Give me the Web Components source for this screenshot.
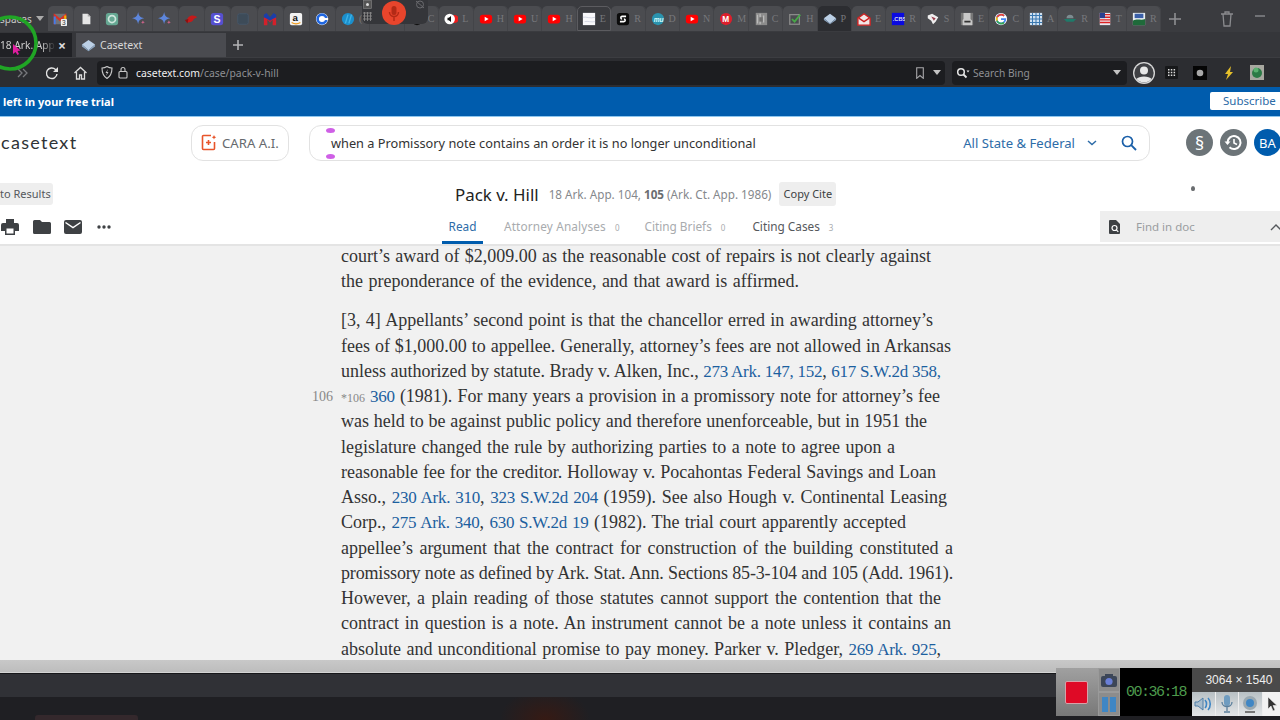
<!DOCTYPE html>
<html>
<head>
<meta charset="utf-8">
<title>Pack v. Hill - Casetext</title>
<style>
  html, body { margin: 0; padding: 0; }
  body { width: 1280px; height: 720px; overflow: hidden; background: #f1f1f1; font-family: "Noto Sans", sans-serif; position: relative; }
</style>
</head>
<body>
<browser-chrome></browser-chrome>
<trial-banner></trial-banner>
<site-header></site-header>
<case-subheader></case-subheader>
<doc-view>
  <doc-para>
    <doc-line w="590">court’s award of $2,009.00 as the reasonable cost of repairs is not clearly against</doc-line>
    <doc-line w="458">the preponderance of the evidence, and that award is affirmed.</doc-line>
  </doc-para>
  <doc-para>
    <doc-line w="592">[3, 4] Appellants’ second point is that the chancellor erred in awarding attorney’s</doc-line>
    <doc-line w="610">fees of $1,000.00 to appellee. Generally, attorney’s fees are not allowed in Arkansas</doc-line>
    <doc-line w="599">unless authorized by statute. Brady v. Alken, Inc., <a>273 Ark. 147, 152</a>, <a>617 S.W.2d 358,</a></doc-line>
    <doc-line w="599" page="106"><small>*106</small> <a>360</a> (1981). For many years a provision in a promissory note for attorney’s fee</doc-line>
    <doc-line w="586">was held to be against public policy and therefore unenforceable, but in 1951 the</doc-line>
    <doc-line w="554">legislature changed the rule by authorizing parties to a note to agree upon a</doc-line>
    <doc-line w="595">reasonable fee for the creditor. Holloway v. Pocahontas Federal Savings and Loan</doc-line>
    <doc-line w="606">Asso., <a>230 Ark. 310</a>, <a>323 S.W.2d 204</a> (1959). See also Hough v. Continental Leasing</doc-line>
    <doc-line w="565">Corp., <a>275 Ark. 340</a>, <a>630 S.W.2d 19</a> (1982). The trial court apparently accepted</doc-line>
    <doc-line w="612">appellee’s argument that the contract for construction of the building constituted a</doc-line>
    <doc-line w="612" tight>promissory note as defined by Ark. Stat. Ann. Sections 85-3-104 and 105 (Add. 1961).</doc-line>
    <doc-line w="600">However, a plain reading of those statutes cannot support the contention that the</doc-line>
    <doc-line w="610">contract in question is a note. An instrument cannot be a note unless it contains an</doc-line>
    <doc-line w="600">absolute and unconditional promise to pay money. Parker v. Pledger, <a>269 Ark. 925</a>,</doc-line>
  </doc-para>
</doc-view>
<task-strip></task-strip>
<mic-overlay></mic-overlay>
<click-marker></click-marker>
<recorder-widget></recorder-widget>

<script>
const FAV = {
  gmail: '<rect x="1" y="2" width="14" height="12" rx="1" fill="#e8e8e8" opacity=".25"/><path d="M2 14V4l6 5 6-5v10" fill="none" stroke="#d93025" stroke-width="2.4"/><path d="M14 14V4" stroke="#f4b400" stroke-width="2.4"/><path d="M2 14V5" stroke="#3f7fe8" stroke-width="2.4"/><rect x="9" y="8" width="7" height="8" rx="1" fill="#eee"/><text x="10.4" y="15" font-size="7.5" font-family="Liberation Sans" fill="#333">3</text>',
  doc: '<path d="M4 2h6l3 3v9H4z" fill="#e6e6e6"/><path d="M10 2v3h3" fill="#aaa"/>',
  gpt: '<rect x="1" y="1" width="14" height="14" rx="3" fill="#66a893"/><circle cx="8" cy="8" r="4" fill="none" stroke="#cfe6dd" stroke-width="2"/>',
  gem: '<path d="M7 0c.7 4.500 2.400 6.300 7 7-4.600.7-6.300 2.500-7 7-.7-4.500-2.400-6.300-7-7 4.600-.7 6.300-2.500 7-7z" fill="#5d86dc"/><path d="M12.500 9.500c.2 1.500.8 2.100 2.300 2.300-1.500.2-2.100.8-2.300 2.300-.2-1.500-.8-2.100-2.300-2.300 1.500-.2 2.100-.8 2.300-2.300z" fill="#d9668f"/>',
  cap: '<path d="M3 12c0-5 3-8 7-8 2 0 4 1 5 2l-4 2c-1 3-3 4-8 4z" fill="#c41a1a"/><path d="M1 9l4-1-1 5z" fill="#8d1010"/>',
  s: '<rect x="1" y="1" width="14" height="14" rx="3" fill="#5650d0"/><text x="4" y="12.500" font-size="12" font-weight="700" font-family="Liberation Sans" fill="#fff">S</text>',
  box: '<rect x="2" y="2" width="12" height="12" rx="2" fill="#3d4b58" stroke="#46576a"/>',
  m: '<path d="M1 15V6h14v9h-4V8.500l-3 3.500-3-3.500V15z" fill="#d4202a"/><path d="M1 6V3l3-2 4 5 4-5 3 2v3l-4 2-3 2-3-2z" fill="#1b3fa8"/>',
  a: '<rect x="1" y="1" width="14" height="14" rx="2" fill="#f2f2f2"/><text x="4" y="10.500" font-size="11" font-weight="700" font-family="Liberation Sans" fill="#111">a</text><path d="M3 12c3 1.800 7 1.800 10 0" fill="none" stroke="#f09a1a" stroke-width="1.400"/>',
  c: '<circle cx="8" cy="8" r="7" fill="#fff"/><circle cx="8" cy="8" r="5" fill="none" stroke="#1f66e0" stroke-width="3"/><rect x="11" y="6.800" width="4" height="2.400" fill="#fff"/>',
  hp: '<circle cx="8" cy="8" r="7" fill="#1b8fcc"/><path d="M5 13l3-10M9 13l3-10" stroke="#3fb2e6" stroke-width="1.600"/>',
  spk: '<circle cx="12" cy="8" r="4.500" fill="#ee1c1c"/><circle cx="6.500" cy="8" r="6" fill="#fff"/><path d="M4 6.500h1.500L8 4.500v7l-2.500-2H4z" fill="#111"/>',
  yt: '<rect x="1" y="3" width="14" height="10" rx="3" fill="#f00"/><path d="M6.500 5.500v5L11 8z" fill="#fff"/>',
  page: '<rect x="1" y="1" width="14" height="14" fill="#f8f8fa"/><path d="M1 6c4-1 8 2 14 0M3 11c4-1 7 1 12 0" fill="none" stroke="#c4c8d8" stroke-width=".8"/>',
  sblack: '<rect x="1" y="1" width="14" height="14" rx="3" fill="#0c0c0c"/><path d="M11.500 5H7a1.500 1.500 0 0 0 0 3M4.500 11H9a1.500 1.500 0 0 0 0-3" fill="none" stroke="#fff" stroke-width="1.800"/>',
  mu: '<circle cx="8" cy="8" r="7" fill="#2a93ae"/><text x="3" y="11" font-size="7.500" font-style="italic" font-weight="700" font-family="Liberation Sans" fill="#dff">mu</text>',
  mred: '<circle cx="8" cy="8" r="7" fill="#dc1f2c"/><text x="3.600" y="11.500" font-size="9.500" font-weight="700" font-family="Liberation Sans" fill="#fff">M</text>',
  gray: '<rect x="2" y="1" width="13" height="14" fill="#8c8c8c"/><path d="M4 3v10M7 2v12M11 4v8" stroke="#bbb" stroke-width="1.500"/><rect x="6" y="6" width="4" height="5" fill="#6f6f6f"/>',
  check: '<rect x="2" y="3" width="11" height="11" fill="none" stroke="#8a8a8a" stroke-width="1.500"/><path d="M4.500 8l3 3L14 3" fill="none" stroke="#48a848" stroke-width="2"/>',
  cube: '<path d="M8 2l7 5-7 6-7-6z" fill="#bcd0e6"/><path d="M1 7l7 6 7-6v2l-7 5-7-5z" fill="#8ea8c4"/>',
  env: '<path d="M1 7l7-5 7 5v8H1z" fill="#f2e6e6" stroke="#c22" stroke-width="1.600"/><path d="M2 7l6 4 6-4" fill="none" stroke="#c22" stroke-width="1.600"/>',
  cbs: '<rect x="1" y="1" width="14" height="14" fill="#0a0ae0"/><text x="2" y="10.500" font-size="6.500" font-weight="700" font-family="Liberation Sans" fill="#dde">.CBS</text>',
  sc: '<path d="M2 4l5-2 7 4-3 5-3 3-2-4-4-3z" fill="#eee"/><path d="M6 5l5 2-2 3z" fill="#9a3a4a"/>',
  face: '<rect x="1" y="1" width="14" height="14" fill="#777"/><path d="M4 1h8v7l2 2v5H3V9l1-1z" fill="#c8c8c8"/><path d="M5 10h7v2H5z" fill="#333"/>',
  g: '<circle cx="8" cy="8" r="7" fill="#fff"/><path d="M8 8h5a5 5 0 1 1-1.500-3.500" fill="none" stroke="#4285f4" stroke-width="2"/><path d="M11.500 4.500A5 5 0 0 0 3.500 6" fill="none" stroke="#ea4335" stroke-width="2"/><path d="M3.500 6a5 5 0 0 0 0 4" fill="none" stroke="#fbbc05" stroke-width="2"/><path d="M3.500 10a5 5 0 0 0 8 2" fill="none" stroke="#34a853" stroke-width="2"/>',
  pat: '<rect x="1" y="1" width="14" height="14" fill="#cfe0f0"/><path d="M1 4h14M1 8h14M1 12h14M4 1v14M8 1v14M12 1v14" stroke="#3a78b0" stroke-width="1.200"/>',
  hat: '<path d="M4 7a4 4 0 0 1 8 0z" fill="#7c8c90"/><path d="M1 8h14l-3 3H4z" fill="#1f7a6a"/>',
  flag: '<rect x="2" y="1" width="12" height="14" fill="#e8e8f0"/><path d="M2 3h12M2 6h12M2 9h12M2 12h12" stroke="#d22" stroke-width="1.500"/><rect x="2" y="1" width="6" height="6" fill="#2a3f90"/>',
  usda: '<rect x="1" y="1" width="14" height="14" fill="#e8eef0"/><path d="M1 10c5-3 9 0 14-2v7H1z" fill="#1f6a3a"/><rect x="3" y="2" width="10" height="5" fill="#3a5fa8"/>',
  black: '<circle cx="8" cy="8" r="7" fill="#111"/>'
};

function shadow(el, html) {
  el.attachShadow({ mode: 'open' }).innerHTML = html;
}

class PinTab extends HTMLElement {
  connectedCallback() {
    const w = this.getAttribute('w') || 34.4;
    shadow(this, `
      <style>
        :host { display: block; box-sizing: border-box; flex: none; height: 25px; background: #4b4c50; border-radius: 5px 5px 0 0; overflow: hidden; box-shadow: inset -1px 0 0 #434448; }
        :host([active]) { background: #2c2d31; }
        :host([framed]) { background: #3a3b3f; outline: 1px solid #5c5c60; outline-offset: -1px; }
        .in { display: flex; align-items: center; height: 100%; padding-left: 5px; }
        svg { width: 14px; height: 14px; flex: none; }
        span { margin-left: 4px; font: 10px "Liberation Serif", serif; color: #77787c; }
      </style>
      <div class="in"><svg viewBox="0 0 16 16">${FAV[this.getAttribute('icon')] || ''}</svg><span>${this.getAttribute('letter') || ''}</span></div>`);
    this.style.width = w + 'px';
  }
}
customElements.define('pin-tab', PinTab);

class BrowserChrome extends HTMLElement {
  connectedCallback() {
    const first = ['gmail','doc','gpt','gem','gem','cap','s','box','m','a','c'];
    const rest = [['hp','('],['',''],['black','C'],['spk','L'],['yt','H'],['yt','U'],['yt','H'],['page','E'],['sblack','R'],['mu','D'],['yt','N'],['mred','M'],['gray','C'],['check','H'],['cube','P'],['env','E'],['cbs','R'],['sc','S'],['face','E'],['g','C'],['pat','A'],['hat','R'],['flag','T'],['usda','R']];
    const tabs = first.map(i => `<pin-tab icon="${i}" w="26.2"></pin-tab>`).join('') +
      rest.map(([i, l]) => `<pin-tab icon="${i}" letter="${l}" ${i === 'page' ? 'framed' : ''} ${i === 'cube' ? 'active' : ''}></pin-tab>`).join('');
    shadow(this, `
      <style>
        :host { display: block; height: 87px; background: #3a3b3f; font-family: "Noto Sans", sans-serif; color: #ddd; overflow: hidden; }
        .strip { display: flex; height: 32px; align-items: flex-end; box-sizing: border-box; padding-bottom: 1px; }
        .spaces { width: 48px; flex: none; height: 25px; display: flex; align-items: center; font-size: 10px; color: #c8c8c8; padding-bottom: 6px; box-sizing: content-box; margin-bottom: -6px; }
        .spaces i { margin-left: 4px; border: 4px solid transparent; border-top: 5px solid #aaa; border-bottom: 0; }
        .end { display: flex; align-items: center; height: 25px; color: #a4a4a6; }
        .end svg { display: block; }
        .tabs { display: flex; height: 25px; background: #35363a; align-items: flex-end; }
        .cur, .other { display: flex; align-items: center; height: 24px; box-sizing: border-box; font-size: 10.5px; white-space: nowrap; }
        .cur { width: 72px; background: #202125; color: #cfcfcf; }
        .cur b { font-weight: 400; font-size: 10.2px; width: 58px; flex: none; -webkit-mask-image: linear-gradient(90deg, #000 72%, transparent 96%); }
        .cur i { font-style: normal; font-size: 14px; font-weight: 700; color: #ddd; }
        .other { width: 150px; margin-left: 4px; background: #4a4b50; padding-left: 5px; color: #d8d8d8; }
        .other svg { width: 15px; height: 15px; margin-right: 4px; }
        .plus { margin-left: 6px; width: 12px; height: 12px; align-self: center; }
        .nav { display: flex; align-items: center; height: 30px; background: #2c2d31; border-top: 1px solid #3c3d41; box-sizing: border-box; }
        .nav > svg { flex: none; }
        .url { margin-left: 9px; width: 848px; height: 24px; background: #1c1d20; border-radius: 4px; display: flex; align-items: center; padding-left: 4px; box-sizing: border-box; font-size: 10.4px; }
        .url b { font-weight: 400; color: #f0f0f0; }
        .url span { color: #8f9094; }
        .url .mark { margin-left: auto; margin-right: 9px; display: block; flex: none; }
        .url em { margin-right: 4px; border: 4px solid transparent; border-top: 5px solid #c4c4c4; border-bottom: 0; }
        .find { margin-left: 7px; width: 175px; height: 24px; background: #1c1d20; border-radius: 4px; display: flex; align-items: center; padding-left: 4px; box-sizing: border-box; font-size: 10.2px; color: #8f9094; }
        .find em { margin-left: auto; margin-right: 6px; border: 4px solid transparent; border-top: 5px solid #c4c4c4; border-bottom: 0; }
        .ext { display: flex; align-items: center; margin-left: 5px; }
        .ext svg { display: block; }
      </style>
      <div class="strip">
        <div class="spaces">spaces<i></i></div>
        ${tabs}
        <div class="end">
          <svg width="14" height="14" viewBox="0 0 14 14" style="margin-left:7px"><path d="M7 1v12M1 7h12" stroke="#8e8f92" stroke-width="1.600"/></svg>
          <svg width="14" height="16" viewBox="0 0 14 16" style="margin-left:38px"><path d="M1 3h12M5 3V1h4v2M3 3l1 12h6l1-12" fill="none" stroke="#8a8b8e" stroke-width="1.300"/></svg>
          <svg width="12" height="2" viewBox="0 0 12 2" style="margin-left:21px;margin-top:-6px"><path d="M0 1h10" stroke="#8a8b8e" stroke-width="1.400"/></svg>
        </div>
      </div>
      <div class="tabs">
        <div class="cur"><b>18 Ark. App</b><i>×</i></div>
        <div class="other"><svg viewBox="0 0 16 16">${FAV.cube}</svg>Casetext</div>
        <svg class="plus" viewBox="0 0 12 12"><path d="M6 1v10M1 6h10" stroke="#b4b4b6" stroke-width="1.600"/></svg>
      </div>
      <div class="nav">
        <svg width="12" height="10" viewBox="0 0 12 10" style="margin-left:17px"><path d="M1 1l4 4-4 4M6 1l4 4-4 4" fill="none" stroke="#77787c" stroke-width="1.300"/></svg>
        <svg width="14" height="14" viewBox="0 0 14 14" style="margin-left:16px"><path d="M12 8a5.300 5.300 0 1 1-1.500-4.500L12 5" fill="none" stroke="#e4e4e4" stroke-width="1.400"/><path d="M13 1v5H8z" fill="#e4e4e4"/></svg>
        <svg width="15" height="14" viewBox="0 0 15 14" style="margin-left:14px"><path d="M1.500 7L7.500 1.500 13.500 7M3.500 6v7h3V9h2v4h3V6" fill="none" stroke="#dcdcdc" stroke-width="1.300"/></svg>
        <div class="url">
          <svg width="12" height="13" viewBox="0 0 12 13"><path d="M1 2c2 0 3.500-.5 5-1.500C7.500 1.500 9 2 11 2c0 5-1 8-5 10.500C2 10 1 7 1 2z" fill="none" stroke="#c8c8c8" stroke-width="1.100"/><path d="M7 3L4.500 7H6l-1 3 2.500-4H6z" fill="#c8c8c8"/></svg>
          <svg width="10" height="13" viewBox="0 0 10 13" style="margin:0 8px 0 5px"><rect x="1" y="5.500" width="8" height="6.500" rx="1" fill="none" stroke="#c8c8c8" stroke-width="1.100"/><path d="M3 5.500V3.500a2 2 0 0 1 4 0v2" fill="none" stroke="#c8c8c8" stroke-width="1.100"/></svg>
          <b>casetext.com</b><span>/case/pack-v-hill</span>
          <svg class="mark" width="8" height="12" viewBox="0 0 8 12"><path d="M.7.7h6.600v10.600L4 8.500.7 11.300z" fill="none" stroke="#a8a8aa" stroke-width="1.100"/></svg>
          <em></em>
        </div>
        <div class="find">
          <svg width="14" height="12" viewBox="0 0 14 12" style="margin-right:3px"><circle cx="5" cy="5" r="3.300" fill="none" stroke="#e6e6e6" stroke-width="1.500"/><path d="M7.500 7.500l3 3" stroke="#e6e6e6" stroke-width="1.800"/><path d="M10.500 3.500h3L12 5.500z" fill="#e6e6e6"/></svg>
          Search Bing<em></em>
        </div>
        <div class="ext">
          <svg width="24" height="24" viewBox="0 0 24 24"><circle cx="12" cy="12" r="11" fill="#d8d8d8"/><circle cx="12" cy="12" r="9.700" fill="#3f4044"/><circle cx="12" cy="9.500" r="4" fill="#e8e8e8"/><path d="M4.500 18c2-3.500 13-3.500 15 0a10 10 0 0 1-15 0z" fill="#e8e8e8"/></svg>
          <svg width="13" height="13" viewBox="0 0 13 13" style="margin-left:9px"><rect width="13" height="13" rx="1" fill="#17181a"/><path d="M3 3h1.500v1.500H3zM5.800 3h1.500v1.500H5.800zM8.600 3h1.500v1.500H8.600zM3 5.800h1.500v1.500H3zM5.800 5.800h1.500v1.500H5.800zM8.600 5.800h1.500v1.500H8.600zM3 8.600h1.500v1.500H3zM5.800 8.600h1.500v1.500H5.800zM8.600 8.600h1.500v1.500H8.600z" fill="#dcdcdc"/></svg>
          <svg width="14" height="14" viewBox="0 0 14 14" style="margin-left:15px"><rect width="14" height="14" fill="#050505"/><circle cx="7" cy="7" r="3.300" fill="#a8a8a8"/></svg>
          <svg width="12" height="14" viewBox="0 0 12 14" style="margin-left:16px"><path d="M8 0L2 8h3l-2 6 7-8H7z" fill="#e6c02a"/></svg>
          <svg width="14" height="15" viewBox="0 0 14 15" style="margin-left:15px"><rect width="14" height="15" fill="#a8a8a0"/><circle cx="7" cy="8" r="5" fill="#2c7a46"/><circle cx="6" cy="5" r="2.500" fill="#5ab070"/></svg>
        </div>
      </div>`);
  }
}
customElements.define('browser-chrome', BrowserChrome);

class TrialBanner extends HTMLElement {
  connectedCallback() {
    shadow(this, `
      <style>
        :host { display: flex; align-items: center; justify-content: space-between; box-sizing: border-box; height: 30px; background: #005cad; border-bottom: 1px solid #8ec6ee; color: #fff; font: 700 11px "Noto Sans", sans-serif; padding-left: 3px; overflow: hidden; }
        button { all: unset; width: 70px; flex: none; box-sizing: border-box; height: 18px; margin-top: -1px; background: #fff; border-radius: 2px 0 0 2px; color: #2b6aa6; font: 400 11.500px "Noto Sans", sans-serif; padding: 0 0 0 13px; line-height: 18px; white-space: nowrap; }
      </style>
      <span>left in your free trial</span>
      <button>Subscribe</button>`);
  }
}
customElements.define('trial-banner', TrialBanner);

class SiteHeader extends HTMLElement {
  connectedCallback() {
    shadow(this, `
      <style>
        :host { display: flex; align-items: center; box-sizing: border-box; height: 49px; background: #fff; padding-top: 2px; font-family: "Noto Sans", sans-serif; position: relative; }
        .logo { width: 191px; flex: none; padding-left: 1px; box-sizing: border-box; font: 400 18px Lato, sans-serif; letter-spacing: 1.300px; color: #2f3336; margin-top: -1px; }
        .cara { width: 98px; height: 36px; flex: none; box-sizing: border-box; border: 1px solid #e2e2e2; border-radius: 12px; display: flex; align-items: center; padding-left: 9px; color: #666a6e; font-size: 13.200px; white-space: nowrap; }
        .cara svg { margin-right: 5px; flex: none; }
        .search { width: 841px; height: 36px; margin-left: 20px; flex: none; box-sizing: border-box; border: 1px solid #e2e2e2; border-radius: 12px; display: flex; align-items: center; padding-left: 21px; font-size: 12.750px; color: #333; position: relative; white-space: nowrap; }
        .search .scope { margin-left: auto; color: #2d6ca8; font-size: 13.100px; }
        .search svg { flex: none; }
        .dot { position: absolute; left: 16px; width: 9px; height: 5px; background: #cf5fe6; border-radius: 50%; }
        .rnd { width: 27px; height: 27px; border-radius: 50%; background: #6c7478; flex: none; display: flex; align-items: center; justify-content: center; color: #fff; font-size: 18px; margin-left: 7px; }
        .rnd.b { background: #005cad; font-size: 13px; }
      </style>
      <div class="logo">casetext</div>
      <div class="cara">
        <svg width="16" height="17" viewBox="0 0 16 17"><path d="M10 1.500H2.500a1 1 0 0 0-1 1v12a1 1 0 0 0 1 1h10a1 1 0 0 0 1-1V8" fill="none" stroke="#e8542a" stroke-width="1.600"/><path d="M7.500 6v5M5 8.500h5" stroke="#e8542a" stroke-width="1.600"/><path d="M13 1l.7 1.500 1.500.7-1.500.7L13 5.500l-.7-1.600-1.500-.7 1.500-.7z" fill="#e8542a"/></svg>
        CARA A.I.
      </div>
      <div class="search">
        <i class="dot" style="top:2px"></i><i class="dot" style="bottom:1px"></i>
        when a Promissory note contains an order it is no longer unconditional
        <span class="scope">All State &amp; Federal</span>
        <svg width="10" height="6" viewBox="0 0 10 6" style="margin-left:12px"><path d="M1 1l4 3.500L9 1" fill="none" stroke="#2d6ca8" stroke-width="1.500"/></svg>
        <svg width="16" height="16" viewBox="0 0 16 16" style="margin:0 12px 0 24px"><circle cx="6.500" cy="6.500" r="5" fill="none" stroke="#1a5fa8" stroke-width="1.700"/><path d="M10.200 10.200L15 15" stroke="#1a5fa8" stroke-width="1.900"/></svg>
      </div>
      <div class="rnd" style="margin-left:36px">§</div>
      <div class="rnd"><svg width="21" height="21" viewBox="0 0 21 21"><path d="M4.500 10.500a6.500 6.500 0 1 1 2 4.700" fill="none" stroke="#fff" stroke-width="2"/><path d="M1.500 9.500h6l-3 3.500z" fill="#fff"/><path d="M11 7v4l3 1.500" fill="none" stroke="#fff" stroke-width="1.600"/></svg></div>
      <div class="rnd b">BA</div>`);
  }
}
customElements.define('site-header', SiteHeader);

class CaseSubheader extends HTMLElement {
  connectedCallback() {
    shadow(this, `
      <style>
        :host { display: block; box-sizing: border-box; height: 80px; background: #fff; border-bottom: 2px solid #e4e4e4; font-family: "Noto Sans", sans-serif; color: #333; position: relative; }
        .top { display: flex; align-items: center; height: 44px; padding-top: 12px; box-sizing: border-box; }
        .back { width: 53px; height: 22px; line-height: 22px; flex: none; background: #eeeeee; border-radius: 0 3px 3px 0; font-size: 11px; color: #55585c; white-space: nowrap; box-sizing: border-box; }
        .title { margin-left: 402px; font-size: 16.900px; color: #222; white-space: nowrap; }
        .cite { margin-left: 10px; font-size: 11.700px; color: #85888c; white-space: nowrap; }
        .cite b { color: #6a6d70; font-weight: 700; }
        .copy { margin-left: 8px; width: 57px; height: 24px; line-height: 24px; text-align: center; background: #eeeeee; border-radius: 3px; font-size: 11px; color: #3c3f42; white-space: nowrap; }
        .flame { position: absolute; left: 1191px; top: 20px; width: 4px; height: 5px; background: #6a6d70; border-radius: 50% 50% 40% 40%; }
        .low { display: flex; align-items: flex-end; height: 34px; }
        .tools { display: flex; align-items: center; width: 442px; flex: none; height: 34px; padding-left: 1px; box-sizing: border-box; }
        .tools svg { flex: none; margin-right: 13px; }
        .tab { height: 34px; box-sizing: border-box; padding-top: 8px; font-size: 11.800px; color: #a8abae; white-space: nowrap; }
        .tab sup { font-size: 8px; vertical-align: baseline; margin-left: 9px; color: #a8abae; letter-spacing: 0; }
        .tab.on { width: 41px; text-align: center; color: #2d6ca8; border-bottom: 3px solid #005cad; }
        .tab.dk { color: #55585c; }
        .find { margin-left: auto; width: 180px; height: 31px; background: #eeeeee; align-self: flex-start; margin-top: 1px; display: flex; align-items: center; padding-left: 9px; box-sizing: border-box; font-size: 11.500px; color: #9a9da0; overflow: hidden; }
        .find svg { flex: none; }
        .find span { margin-left: 15px; }
        .find i { margin-left: auto; margin-right: -2px; }
      </style>
      <div class="top">
        <div class="back">to Results</div>
        <div class="title">Pack v. Hill</div>
        <div class="cite">18 Ark. App. 104, <b>105</b> (Ark. Ct. App. 1986)</div>
        <div class="copy">Copy Cite</div>
      </div>
      <div class="flame"></div>
      <div class="low">
        <div class="tools">
          <svg width="18" height="16" viewBox="0 0 18 16"><path d="M5 0h8v4H5zM2 4h14a2 2 0 0 1 2 2v6h-4v4H4v-4H0V6a2 2 0 0 1 2-2z" fill="#3e4144"/><rect x="5.500" y="9.500" width="7" height="5" fill="#fff"/></svg>
          <svg width="18" height="14" viewBox="0 0 18 14" style="margin-left:1px"><path d="M1.500 0H7l2 2h7.500A1.500 1.500 0 0 1 18 3.500V12.500a1.500 1.500 0 0 1-1.500 1.500h-15A1.500 1.500 0 0 1 0 12.500V1.500A1.500 1.500 0 0 1 1.500 0z" fill="#3e4144"/></svg>
          <svg width="18" height="14" viewBox="0 0 18 14"><rect width="18" height="14" rx="2" fill="#3e4144"/><path d="M1.500 2.500L9 7.500l7.500-5" fill="none" stroke="#fff" stroke-width="1.500"/></svg>
          <svg width="14" height="4" viewBox="0 0 14 4" style="margin-left:2px"><circle cx="2" cy="2" r="1.700" fill="#3e4144"/><circle cx="7" cy="2" r="1.700" fill="#3e4144"/><circle cx="12" cy="2" r="1.700" fill="#3e4144"/></svg>
        </div>
        <div class="tab on">Read</div>
        <div class="tab" style="margin-left:21px;letter-spacing:.15px">Attorney Analyses<sup>0</sup></div>
        <div class="tab" style="margin-left:25px">Citing Briefs<sup>0</sup></div>
        <div class="tab dk" style="margin-left:27px">Citing Cases<sup>3</sup></div>
        <div class="find">
          <svg width="12" height="14" viewBox="0 0 12 14"><path d="M1 0h6l4 4v9a1 1 0 0 1-1 1H1a1 1 0 0 1-1-1V1a1 1 0 0 1 1-1z" fill="#3e4144"/><circle cx="5.500" cy="8" r="2.500" fill="none" stroke="#fff" stroke-width="1.200"/><path d="M7.300 9.800l2 2" stroke="#fff" stroke-width="1.200"/></svg>
          <span>Find in doc</span>
          <i><svg width="12" height="7" viewBox="0 0 12 7"><path d="M1 6l5-5 5 5" fill="none" stroke="#55585c" stroke-width="1.400"/></svg></i>
        </div>
      </div>`);
  }
}
customElements.define('case-subheader', CaseSubheader);

class DocView extends HTMLElement {
  connectedCallback() {
    shadow(this, `
      <style>
        :host { display: block; box-sizing: border-box; height: 414px; background: #f1f1f1; padding: 0 0 0 341px; overflow: hidden; font: 18px "Liberation Serif", serif; color: #333; }
        .wrap { margin-top: -2px; }
      </style>
      <div class="wrap"><slot></slot></div>`);
  }
}
customElements.define('doc-view', DocView);

class DocPara extends HTMLElement {
  connectedCallback() {
    shadow(this, `<style>:host { display: block; margin-bottom: 14px; }</style><slot></slot>`);
  }
}
customElements.define('doc-para', DocPara);

class DocLine extends HTMLElement {
  connectedCallback() {
    const pg = this.getAttribute('page');
    this.querySelectorAll('a').forEach(a => { a.style.cssText = 'color:#1c5f9f;font-size:17px;letter-spacing:-.25px;'; });
    this.querySelectorAll('small').forEach(s => { s.style.cssText = 'font-size:12px;color:#888;'; });
    shadow(this, `
      <style>
        :host { display: block; position: relative; height: 25.240px; line-height: 25.240px; white-space: nowrap; text-align: justify; text-align-last: justify; }
        :host([tight]) { letter-spacing: -.16px; }
        .pg { position: absolute; left: -29px; top: 0; font-size: 14px; color: #888; }
      </style>
      ${pg ? `<span class="pg">${pg}</span>` : ''}<slot></slot>`);
    this.style.width = this.getAttribute('w') + 'px';
  }
}
customElements.define('doc-line', DocLine);

class TaskStrip extends HTMLElement {
  connectedCallback() {
    shadow(this, `
      <style>
        :host { display: block; height: 61px; overflow: hidden; position: relative; }
        .bar { height: 13px; background: linear-gradient(#c8c8c8, #bdbdbd); border-bottom: 1px solid #d4d4d4; box-sizing: border-box; }
        .up { height: 24px; background: #303136; border-top: 1px solid #16171a; box-sizing: border-box; }
        .dn { height: 24px; background: radial-gradient(ellipse 45px 30px at 545px 22px, #361a14, transparent), #1f1f23; }
        .chip { width: 103px; height: 6px; margin-left: 35px; margin-top: 18px; background: #34282c; border-radius: 3px 3px 0 0; float: left; }
      </style>
      <div class="bar"></div>
      <div class="up"></div>
      <div class="dn"><div class="chip"></div></div>`);
  }
}
customElements.define('task-strip', TaskStrip);

class MicOverlay extends HTMLElement {
  connectedCallback() {
    shadow(this, `
      <style>
        :host { position: absolute; left: 362px; top: 0; width: 66px; height: 24px; background: #35363a; border-radius: 0 0 6px 6px; }
        .mic { position: absolute; left: 20px; top: 1px; width: 24px; height: 24px; border-radius: 50%; background: #e8452c; display: flex; align-items: center; justify-content: center; }
        svg { display: block; }
        .a, .b, .c { position: absolute; }
        .a { left: 1px; top: 0; } .b { left: 1px; top: 12px; } .c { left: 53px; top: 0; }
      </style>
      <svg class="a" width="10" height="9" viewBox="0 0 10 9"><rect x=".5" y=".5" width="8" height="8" fill="#555" stroke="#888" stroke-width=".6"/><circle cx="4.500" cy="4.500" r="1.500" fill="#ddd"/></svg>
      <svg class="b" width="10" height="10" viewBox="0 0 10 10"><path d="M0 1h9M0 4h9M0 7h9M1.500 0v9M4.500 0v9M7.500 0v9" stroke="#888" stroke-width=".9"/></svg>
      <svg class="c" width="10" height="9" viewBox="0 0 10 9"><circle cx="5" cy="4.500" r="3.500" fill="none" stroke="#6a6a6e"/><path d="M1 1l8 7" stroke="#6a6a6e"/></svg>
      <div class="mic"><svg width="12" height="17" viewBox="0 0 12 17"><rect x="3.500" y="1" width="5" height="9" rx="2.500" fill="#b32a16"/><path d="M1.500 7a4.500 4.500 0 0 0 9 0M6 12v4" fill="none" stroke="#b32a16" stroke-width="1.500"/></svg></div>`);
  }
}
customElements.define('mic-overlay', MicOverlay);

class ClickMarker extends HTMLElement {
  connectedCallback() {
    shadow(this, `
      <style>
        :host { position: absolute; left: 0; top: 0; width: 44px; height: 76px; overflow: hidden; pointer-events: none; }
        svg { display: block; }
      </style>
      <svg width="44" height="76" viewBox="0 0 44 76">
        <circle cx="10" cy="43" r="26" fill="none" stroke="#20a525" stroke-width="3.600"/>
        <path d="M13 44l0 10 2.500-2 2 3 1.500-1-1.500-3 3-.5z" fill="#e01ea0"/>
      </svg>`);
  }
}
customElements.define('click-marker', ClickMarker);

class RecorderWidget extends HTMLElement {
  connectedCallback() {
    shadow(this, `
      <style>
        :host { position: absolute; left: 1056px; top: 668px; width: 224px; height: 48px; display: flex; background: #8a8a8a; font-family: "Liberation Sans", sans-serif; }
        .stop { width: 42px; flex: none; display: flex; align-items: center; justify-content: center; background: linear-gradient(#a0a0a0, #787878); }
        .stop i { width: 21px; height: 21px; background: #df0a26; border: 1px solid #d8a0a8; border-radius: 2px; margin-left: -2px; }
        .mid { width: 22px; flex: none; display: flex; flex-direction: column; background: #8c8c8c; }
        .mid div { flex: 1; display: flex; align-items: center; justify-content: center; border: 1px solid #9a9a9a; box-sizing: border-box; }
        .time { width: 72px; flex: none; background: #000; color: #4d9a4d; font: 15px "Liberation Mono", monospace; letter-spacing: -1.500px; display: flex; align-items: center; justify-content: center; }
        .right { flex: 1; display: flex; flex-direction: column; }
        .size { height: 24px; display: flex; align-items: center; justify-content: flex-end; padding-right: 8px; color: #eee; font-size: 12px; background: #4a4a4a; }
        .btns { height: 24px; display: flex; }
        .btns div { width: 23.500px; display: flex; align-items: center; justify-content: center; background: linear-gradient(#b8c0c4, #e4e6e8); border-right: 1px solid #eee; box-sizing: border-box; }
        .btns div:last-child { background: #f2f2f2; border: 0; width: 18px; justify-content: flex-start; padding-left: 4px; }
        svg { display: block; }
      </style>
      <div class="stop"><i></i></div>
      <div class="mid">
        <div><svg width="18" height="15" viewBox="0 0 18 15"><rect x="1" y="3" width="16" height="11" rx="2" fill="#3c4658"/><rect x="5" y="1" width="8" height="3" fill="#3c4658"/><circle cx="9" cy="8.500" r="3.600" fill="#6a7fd8"/></svg></div>
        <div><svg width="16" height="15" viewBox="0 0 16 15"><rect x="1" y="0" width="6" height="15" fill="#3f86c4"/><rect x="9" y="0" width="6" height="15" fill="#3f86c4"/></svg></div>
      </div>
      <div class="time">00:36:18</div>
      <div class="right">
        <div class="size">3064 × 1540</div>
        <div class="btns">
          <div><svg width="18" height="16" viewBox="0 0 18 16"><path d="M1 6h3l5-4v12l-5-4H1z" fill="#a8bccc" stroke="#4f7ea8"/><path d="M11 4c2 2 2 6 0 8M14 2c3 3 3 9 0 12" fill="none" stroke="#3f86c4" stroke-width="1.600"/></svg></div>
          <div><svg width="12" height="18" viewBox="0 0 12 18"><rect x="3" y="0" width="6" height="11" rx="3" fill="#6f9cc0"/><path d="M1 7c0 6 10 6 10 0M6 12v4M3 17h6" fill="none" stroke="#5b7f9c" stroke-width="1.300"/></svg></div>
          <div><svg width="16" height="18" viewBox="0 0 16 18"><circle cx="8" cy="8" r="7" fill="#9aa8b0"/><circle cx="8" cy="8" r="4" fill="#3f86c4"/><path d="M3 17h10" stroke="#777" stroke-width="2"/></svg></div>
          <div><svg width="11" height="16" viewBox="0 0 11 16"><path d="M1 1v12l3-3 2 5 2-1-2-4.500h4z" fill="#333" stroke="#eee" stroke-width=".6"/></svg></div>
        </div>
      </div>`);
  }
}
customElements.define('recorder-widget', RecorderWidget);
</script>
</body>
</html>
